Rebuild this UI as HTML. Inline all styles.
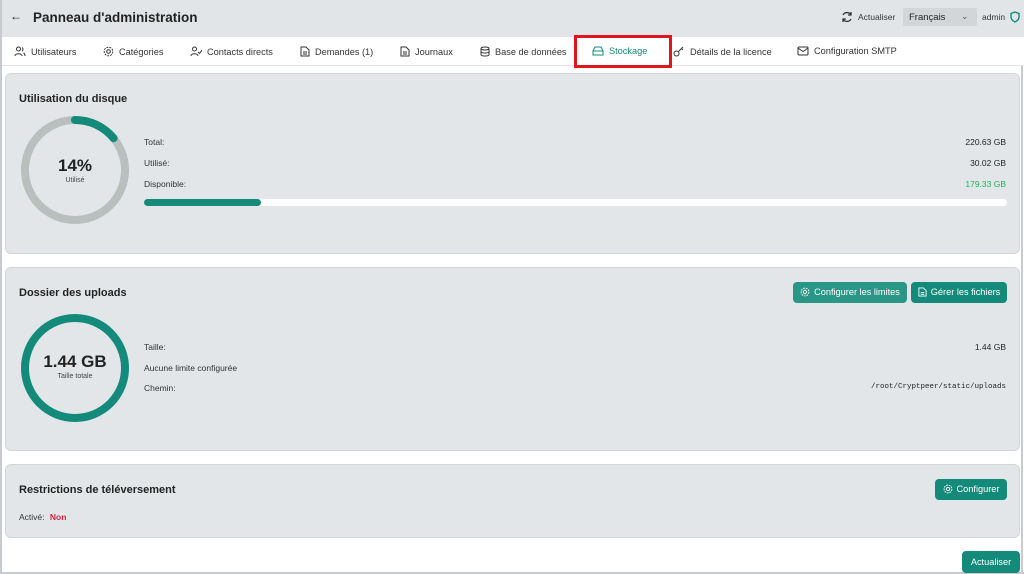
<!DOCTYPE html>
<html><head><meta charset="utf-8"><style>
*{box-sizing:border-box;margin:0;padding:0}
body{width:1024px;height:574px;overflow:hidden;background:#fff;font-family:"Liberation Sans",sans-serif;color:#222;position:relative;font-size:10px}
.hdr{position:absolute;left:0;top:0;width:1024px;height:37px;background:#e2e5e7}
.tabs{position:absolute;left:0;top:37px;width:1024px;height:29px;background:#fff;border-bottom:1px solid #e3e5e7}
.tab{position:absolute;top:9px;font-size:9.2px;color:#333;white-space:nowrap}
.tab svg{vertical-align:-2px;margin-right:5px}
.card{position:absolute;left:5px;width:1015px;background:#e3e6e8;border:1px solid #d3d6d8;border-radius:6px}
.t{position:absolute;font-size:11px;font-weight:bold;color:#222}
.lbl{position:absolute;font-size:8.5px;color:#333}
.val{position:absolute;right:13px;font-size:8.5px;color:#222;text-align:right}
.btn{position:absolute;background:#138a7a;color:#fff;border-radius:4px;font-size:9.2px;height:21px;line-height:21px;text-align:center;white-space:nowrap}
.btn svg{vertical-align:-2px;margin-right:4px}
</style></head><body>
<div style="position:absolute;left:0;top:0;width:2px;height:574px;background:#c8cbcd;z-index:5"></div>
<div style="position:absolute;left:1021px;top:66px;width:2px;height:508px;background:#c8cbcd"></div>
<div style="position:absolute;left:0;top:572px;width:1024px;height:2px;background:#c8cbcd"></div>
<div class="hdr">
 <div style="position:absolute;left:10px;top:9px;font-size:12px">←</div>
 <div style="position:absolute;left:33px;top:10px;font-size:13.5px;font-weight:bold">Panneau d'administration</div>
 <svg style="position:absolute;left:841px;top:11px" width="12" height="12" viewBox="0 0 12 12" fill="none" stroke="#333" stroke-width="1.3"><path d="M10 4A4.5 4.5 0 0 0 2 4M2 8a4.5 4.5 0 0 0 8 0M10 1v3H7M2 11V8h3"/></svg>
 <div style="position:absolute;left:858px;top:12px;font-size:8.5px;color:#333">Actualiser</div>
 <div style="position:absolute;left:903px;top:8px;width:74px;height:18px;background:#d3d6d8;border-radius:2px"><span style="position:absolute;left:6px;top:4px;font-size:9.5px">Français</span><span style="position:absolute;left:58px;top:3px;font-size:9px;color:#555">⌄</span></div>
 <div style="position:absolute;left:982px;top:12px;font-size:8.5px;color:#333">admin</div>
 <svg style="position:absolute;left:1010px;top:11px" width="10" height="12" viewBox="0 0 10 12" fill="none" stroke="#138a7a" stroke-width="1.4"><path d="M5 1L1 2.5v3.5c0 2.5 2 4 4 5 2-1 4-2.5 4-5V2.5z"/></svg>
</div>
<div class="tabs">
 <div class="tab" style="left:14px"><svg width="12" height="11" viewBox="0 0 12 11" fill="none" stroke="#333"><circle cx="4.5" cy="3" r="2"/><path d="M1 10c0-3 7-3 7 0M8 1.5a2 2 0 0 1 0 3.5M9.5 7c1 .5 1.5 1.5 1.5 3"/></svg>Utilisateurs</div>
 <div class="tab" style="left:103px"><svg width="11" height="11" viewBox="0 0 11 11" fill="none" stroke="#333"><circle cx="5.5" cy="5.5" r="1.8"/><circle cx="5.5" cy="5.5" r="4.3" stroke-dasharray="2 1"/></svg>Catégories</div>
 <div class="tab" style="left:190px"><svg width="12" height="11" viewBox="0 0 12 11" fill="none" stroke="#333"><circle cx="4.5" cy="3" r="2"/><path d="M1 10c0-3 7-3 7 0M8 6l1.5 1.5L12 4"/></svg>Contacts directs</div>
 <div class="tab" style="left:300px"><svg width="10" height="11" viewBox="0 0 10 11" fill="none" stroke="#333"><path d="M1 1h5l3 3v6H1zM3 6h4M3 8h4"/></svg>Demandes (1)</div>
 <div class="tab" style="left:400px"><svg width="10" height="11" viewBox="0 0 10 11" fill="none" stroke="#333"><path d="M1 1h5l3 3v6H1zM3 6h4M3 8h4"/></svg>Journaux</div>
 <div class="tab" style="left:480px"><svg width="10" height="11" viewBox="0 0 10 11" fill="none" stroke="#333"><ellipse cx="5" cy="2.5" rx="4" ry="1.5"/><path d="M1 2.5v6c0 2 8 2 8 0v-6M1 5.5c0 2 8 2 8 0"/></svg>Base de données</div>
 <div class="tab" style="left:592px;color:#138a7a"><svg width="12" height="10" viewBox="0 0 12 10" fill="none" stroke="#138a7a"><path d="M1 5l2-4h6l2 4v4H1zM1 5h10"/></svg>Stockage</div>
 <div class="tab" style="left:673px"><svg width="12" height="11" viewBox="0 0 12 11" fill="none" stroke="#333"><circle cx="3.5" cy="7.5" r="2.5"/><path d="M5.5 5.5L10 1M8.5 2.5l1.5 1.5"/></svg>Détails de la licence</div>
 <div class="tab" style="left:797px"><svg width="12" height="10" viewBox="0 0 12 10" fill="none" stroke="#333"><rect x="1" y="1" width="10" height="8" rx="1"/><path d="M1 2l5 3.5L11 2"/></svg>Configuration SMTP</div>
</div>
<div style="position:absolute;left:574px;top:35px;width:98px;height:33px;border:3px solid #e0161d"></div>

<div class="card" style="top:73px;height:181px">
 <div class="t" style="left:13px;top:19px">Utilisation du disque</div>
 <svg style="position:absolute;left:14px;top:41px" width="110" height="110" viewBox="0 0 110 110"><circle cx="55" cy="55" r="50" fill="none" stroke="#b9bfbd" stroke-width="8"/><circle cx="55" cy="55" r="50" fill="none" stroke="#138a7a" stroke-width="8" stroke-linecap="round" stroke-dasharray="44 400" transform="rotate(-90 55 55)"/></svg>
 <div style="position:absolute;left:19px;top:82px;width:100px;text-align:center;font-size:17px;font-weight:bold">14%</div>
 <div style="position:absolute;left:19px;top:103px;width:100px;text-align:center;font-size:7px;color:#444">Utilisé</div>
 <div class="lbl" style="left:138px;top:63px">Total:</div><div class="val" style="top:63px">220.63 GB</div>
 <div class="lbl" style="left:138px;top:84px">Utilisé:</div><div class="val" style="top:84px">30.02 GB</div>
 <div class="lbl" style="left:138px;top:105px">Disponible:</div><div class="val" style="top:105px;color:#1fb35b">179.33 GB</div>
 <div style="position:absolute;left:138px;top:125px;width:863px;height:7px;background:#fff;border-radius:4px"><div style="width:117px;height:7px;background:#138a7a;border-radius:4px"></div></div>
</div>

<div class="card" style="top:267px;height:184px">
 <div class="t" style="left:13px;top:19px">Dossier des uploads</div>
 <div class="btn" style="left:787px;top:14px;width:114px;background:#2a9686"><svg width="10" height="10" viewBox="0 0 11 11" fill="none" stroke="#fff"><circle cx="5.5" cy="5.5" r="1.8"/><circle cx="5.5" cy="5.5" r="4.3" stroke-dasharray="2 1"/></svg>Configurer les limites</div>
 <div class="btn" style="left:905px;top:14px;width:96px"><svg width="9" height="10" viewBox="0 0 10 11" fill="none" stroke="#fff"><path d="M1 1h5l3 3v6H1zM3 6h4M3 8h4"/></svg>Gérer les fichiers</div>
 <svg style="position:absolute;left:14px;top:45px" width="110" height="110" viewBox="0 0 110 110"><circle cx="55" cy="55" r="50" fill="none" stroke="#138a7a" stroke-width="8"/></svg>
 <div style="position:absolute;left:19px;top:84px;width:100px;text-align:center;font-size:17px;font-weight:bold">1.44 GB</div>
 <div style="position:absolute;left:19px;top:105px;width:100px;text-align:center;font-size:7px;color:#444">Taille totale</div>
 <div class="lbl" style="left:138px;top:74px">Taille:</div><div class="val" style="top:74px">1.44 GB</div>
 <div class="lbl" style="left:138px;top:95px">Aucune limite configurée</div>
 <div class="lbl" style="left:138px;top:115px">Chemin:</div><div class="val" style="top:115px;font-family:'Liberation Mono',monospace;font-size:7.5px">/root/Cryptpeer/static/uploads</div>
</div>

<div class="card" style="top:464px;height:74px">
 <div class="t" style="left:13px;top:19px">Restrictions de téléversement</div>
 <div class="btn" style="left:929px;top:14px;width:72px"><svg width="10" height="10" viewBox="0 0 11 11" fill="none" stroke="#fff"><circle cx="5.5" cy="5.5" r="1.8"/><circle cx="5.5" cy="5.5" r="4.3" stroke-dasharray="2 1"/></svg>Configurer</div>
 <div style="position:absolute;left:13px;top:47px;font-size:8.5px;color:#333">Activé: <b style="color:#e0203a;margin-left:3px">Non</b></div>
</div>
<div class="btn" style="left:962px;top:551px;width:58px;height:22px;line-height:22px">Actualiser</div>
</body></html>
